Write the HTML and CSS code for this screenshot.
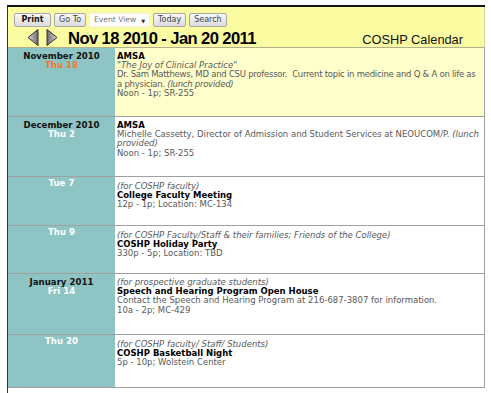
FILE: index.html
```html
<!DOCTYPE html>
<html lang="en">
  <head>
    <meta charset="UTF-8" />
    <title>COSHP Calendar</title>
    <link rel="stylesheet" href="styles.css">
  </head>
  <body>
    <div class="frame">
      <!-- Header -->
      <header>
        <div class="toolbar">
          <button class="btn btn-print">Print</button>
          <button class="btn">Go To</button>
          <div class="select">Event View <span class="caret">&#9660;</span></div>
          <button class="btn">Today</button>
          <button class="btn">Search</button>
        </div>
        <div class="title-row">
          <div class="arrows">
            <svg width="12" height="17" viewBox="0 0 12 17">
              <defs>
                <linearGradient id="ga" x1="0" y1="0" x2="1" y2="0">
                  <stop offset="0" stop-color="#d8d8d8"/>
                  <stop offset="1" stop-color="#6a6a6a"/>
                </linearGradient>
              </defs>
              <polygon points="11,0.5 11,16.5 1,8.5" fill="url(#ga)" stroke="#333" stroke-width="1"/>
            </svg>
            <svg width="12" height="17" viewBox="0 0 12 17">
              <defs>
                <linearGradient id="gb" x1="0" y1="0" x2="1" y2="0">
                  <stop offset="0" stop-color="#6a6a6a"/>
                  <stop offset="1" stop-color="#d8d8d8"/>
                </linearGradient>
              </defs>
              <polygon points="1,0.5 1,16.5 11,8.5" fill="url(#gb)" stroke="#333" stroke-width="1"/>
            </svg>
          </div>
          <h1>Nov 18 2010 - Jan 20 2011</h1>
          <span class="cal-name">COSHP Calendar</span>
        </div>
      </header>

      <!-- Events -->
      <div class="row today h1">
        <div class="date">
          <div class="month">November 2010</div>
          <div class="day day-today">Thu 18</div>
        </div>
        <div class="event">
          <div class="ev-title">AMSA</div>
          <div class="note">"The Joy of Clinical Practice"</div>
          <div class="tight">Dr. Sam Matthews, MD and CSU professor.&nbsp; Current topic in medicine and Q &amp; A on life as a physician. <i>(lunch provided)</i></div>
          <div>Noon - 1p; SR-255</div>
        </div>
      </div>

      <div class="row h2">
        <div class="date">
          <div class="month">December 2010</div>
          <div class="day">Thu 2</div>
        </div>
        <div class="event">
          <div class="ev-title">AMSA</div>
          <div>Michelle Cassetty, Director of Admission and Student Services at NEOUCOM/P. <i>(lunch provided)</i></div>
          <div>Noon - 1p; SR-255</div>
        </div>
      </div>

      <div class="row h3">
        <div class="date">
          <div class="day">Tue 7</div>
        </div>
        <div class="event">
          <div class="note">(for COSHP faculty)</div>
          <div class="ev-title">College Faculty Meeting</div>
          <div>12p - 1p; Location: MC-134</div>
        </div>
      </div>

      <div class="row h4">
        <div class="date">
          <div class="day">Thu 9</div>
        </div>
        <div class="event">
          <div class="note">(for COSHP Faculty/Staff &amp; their families; Friends of the College)</div>
          <div class="ev-title">COSHP Holiday Party</div>
          <div>330p - 5p; Location: TBD</div>
        </div>
      </div>

      <div class="row h5">
        <div class="date">
          <div class="month">January 2011</div>
          <div class="day">Fri 14</div>
        </div>
        <div class="event">
          <div class="note">(for prospective graduate students)</div>
          <div class="ev-title">Speech and Hearing Program Open House</div>
          <div>Contact the Speech and Hearing Program at 216-687-3807 for information.</div>
          <div>10a - 2p; MC-429</div>
        </div>
      </div>

      <div class="row h6">
        <div class="date">
          <div class="day">Thu 20</div>
        </div>
        <div class="event">
          <div class="note">(for COSHP faculty/ Staff/ Students)</div>
          <div class="ev-title">COSHP Basketball Night</div>
          <div>5p - 10p; Wolstein Center</div>
        </div>
      </div>

      <div class="row-end"></div>
    </div>
  </body>
</html>
```

FILE: styles.css
```css
:root {
  --header-bg: #fbfba2;
  --today-bg: #ffffcc;
  --teal: #8ec4c3;
  --line: #a0a0a0;
  --text-grey: #595959;
  --frame: #1f3f1f;
}

* {
  margin: 0;
  padding: 0;
  box-sizing: border-box;
}

body {
  background: #fff;
  font-family: "DejaVu Sans", Verdana, sans-serif;
  font-size: 8.5px;
  color: var(--text-grey);
}

.frame {
  margin: 5px 0 0 7px;
  width: 478px;
  border-top: 2px solid #111;
  border-left: 1px solid var(--frame);
}

/* Header */
header {
  background: var(--header-bg);
  height: 40px;
  border-right: 1px solid #d8d8a0;
  padding: 5px 0 0 6px;
}

.toolbar {
  display: flex;
  align-items: center;
  gap: 3px;
  height: 15px;
}

.btn {
  height: 14px;
  padding: 0 4px;
  border: 1px solid #a8a8a8;
  border-radius: 2px;
  background: linear-gradient(#f8f8f8, #dcdcdc);
  font-family: "DejaVu Sans", Verdana, sans-serif;
  font-size: 8px;
  color: #444;
}

.btn-print {
  font-weight: bold;
  color: #111;
  width: 37px;
}

.select {
  width: 61px;
  height: 14px;
  background: #fff;
  border: 1px solid #eee;
  color: #777;
  font-size: 7.6px;
  line-height: 12px;
  padding: 0 4px;
  display: flex;
  justify-content: space-between;
}

.caret {
  font-size: 5px;
  color: #222;
  padding-top: 1px;
}

.title-row {
  display: flex;
  align-items: center;
  height: 19px;
  margin-top: 1px;
}

.arrows {
  display: flex;
  gap: 7px;
  padding-left: 13px;
  width: 54px;
}

h1 {
  font-family: "Liberation Sans", Arial, sans-serif;
  font-weight: bold;
  font-size: 16.6px;
  letter-spacing: -0.6px;
  color: #000;
  padding-top: 2px;
}

.cal-name {
  margin-left: auto;
  margin-right: 21px;
  font-family: "Liberation Sans", Arial, sans-serif;
  font-size: 12.8px;
  color: #111;
  padding-top: 4px;
}

/* Rows */
.row {
  display: grid;
  grid-template-columns: 107px 1fr;
  border-top: 1px solid var(--line);
}

.row:first-of-type {
  border-top: 1px solid #b0b090;
}

.row .event {
  border-right: 1px solid var(--line);
  padding: 4px 2px 0 2px;
  line-height: 9.2px;
}

.today .event {
  background: var(--today-bg);
}

.date {
  background: var(--teal);
  text-align: center;
  padding-top: 4px;
  font-weight: bold;
  line-height: 9.2px;
}

.month {
  color: #111;
  font-size: 8.6px;
}

.day {
  color: #fff;
  font-size: 8.6px;
}

.day-today {
  color: #f07a2a;
}

.ev-title {
  color: #000;
  font-weight: bold;
}

.note {
  font-style: italic;
}

.tight {
  letter-spacing: -0.25px;
}

.h1 { height: 69px; }
.h2 { height: 60px; }
.h3 { height: 49px; }
.h4 { height: 48px; }
.h5 { height: 61px; }
.h6 { height: 53px; }

.h3 .date, .h4 .date, .h6 .date {
  padding-top: 2px;
}

.h3 .event, .h4 .event, .h6 .event {
  padding-top: 5px;
}

.row-end {
  height: 8px;
  border-top: 1px solid var(--line);
}
```
